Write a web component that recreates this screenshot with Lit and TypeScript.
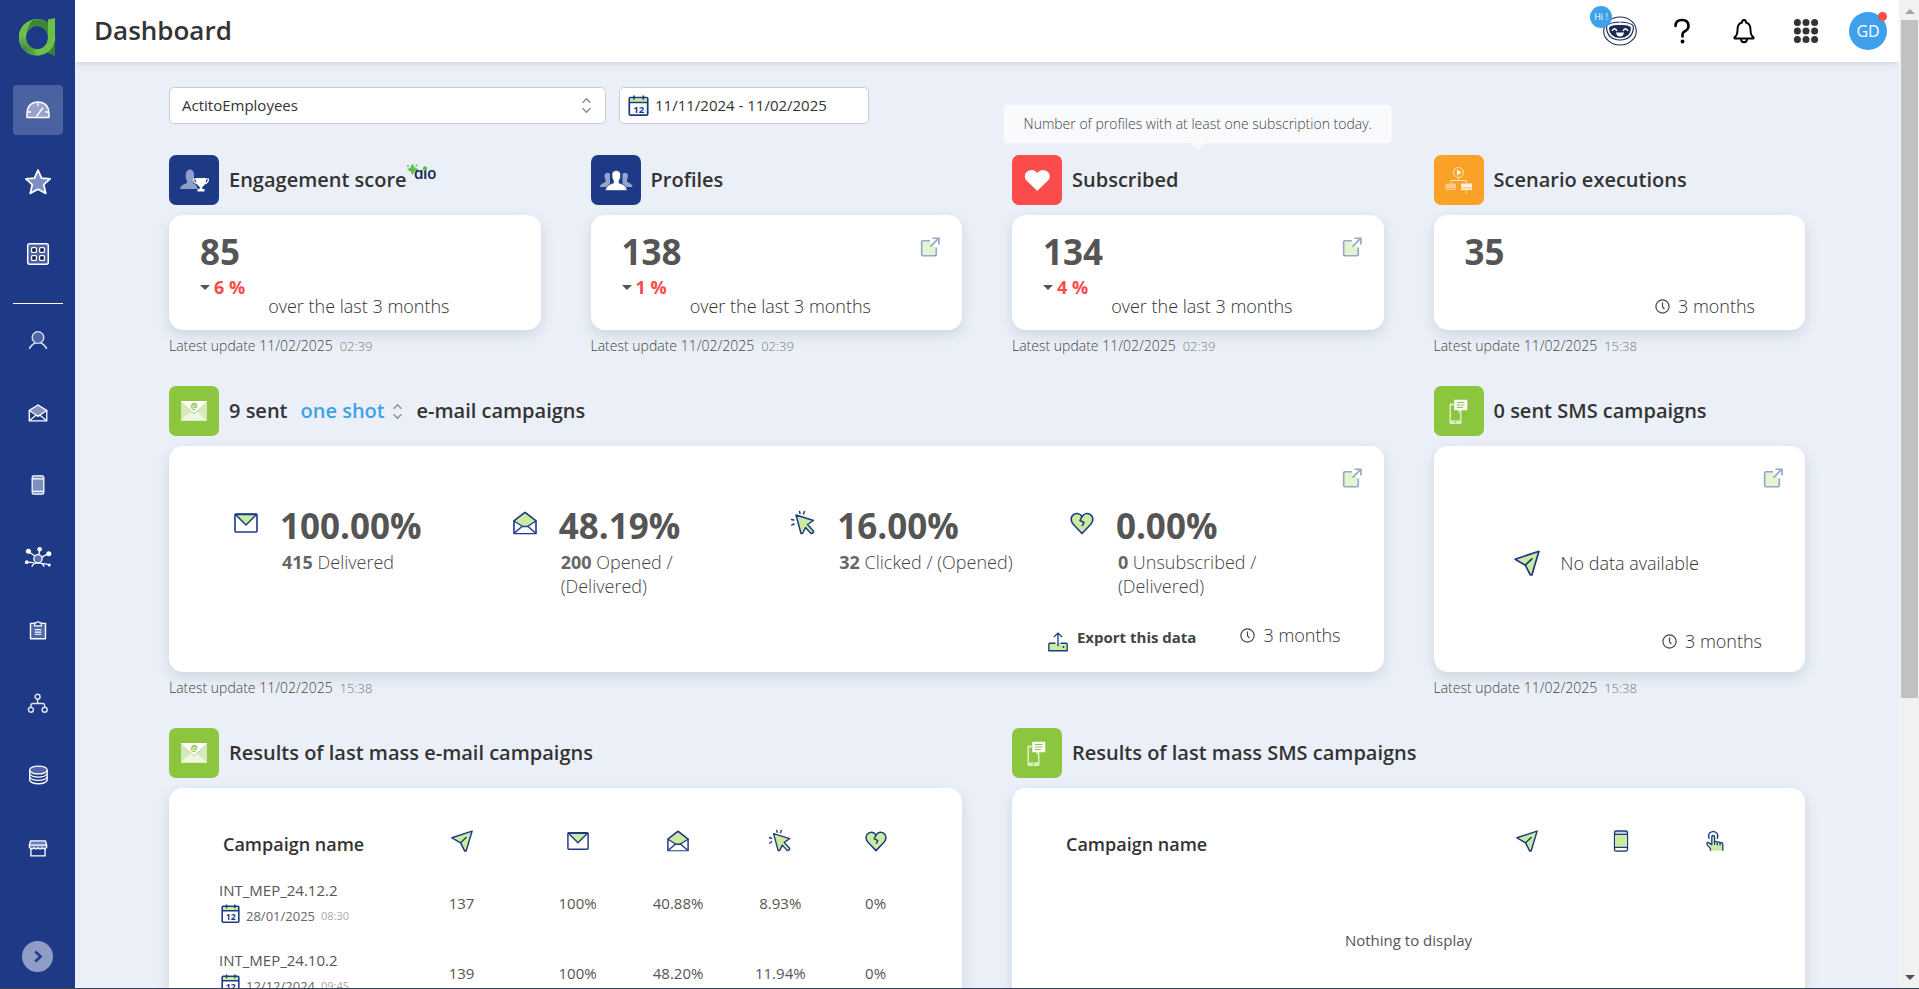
import { LitElement, html, svg, css, nothing, TemplateResult, SVGTemplateResult } from "lit";
import { customElement, property } from "lit/decorators.js";

const NAVY = "#1e3a87";
const LIME = "#cbeb9f";

const glyphs: Record<string, SVGTemplateResult> = {
  mail: svg`<rect x="1" y="3" width="22" height="18" rx="1" fill="#fff" stroke=${NAVY} stroke-width="1.6"/>
    <path d="M1.5 3.5 12 14 22.500 3.500Z" fill=${LIME} stroke=${NAVY} stroke-width="1.500" stroke-linejoin="round"/>`,
  mailOpen: svg`<path d="M1 10 12 1.500 23 10V22.500H1Z" fill="#fff" stroke=${NAVY} stroke-width="1.600" stroke-linejoin="round"/>
    <path d="M1 10 12 1.500 23 10 12 17Z" fill=${LIME} stroke=${NAVY} stroke-width="1.400" stroke-linejoin="round"/>
    <path d="M1.500 22 9 15.500H15L22.500 22" fill="#fff" stroke=${NAVY} stroke-width="1.500" stroke-linejoin="round"/>`,
  cursor: svg`<path d="M5 4 22.500 9.500 16.500 13.500 22.500 20Q22.500 22.500 20 22.500L14.500 16.500 11.500 22.500H10Z" fill=${LIME} stroke=${NAVY} stroke-width="1.500" stroke-linejoin="round"/>
    <path d="M9 2.500 8.500 0.500M12.500 3 13.500 0.500M0.500 8.500 2.800 9M0.800 14.200 3 12.800" stroke=${NAVY} stroke-width="1.500" stroke-linecap="round" fill="none"/>`,
  heartBroken: svg`<path d="M12 22.500 3 13Q0 9 2 5.200 4 2.300 7.500 2.500 10.500 3 12 5.500 13.500 3 16.500 2.500 20 2.300 22 5.200 24 9 21 13Z" fill=${LIME} stroke=${NAVY} stroke-width="1.600" stroke-linejoin="round"/>
    <path d="M12 5.500 10 9.500 14 11.500 12.500 14.500" fill="none" stroke=${NAVY} stroke-width="1.600" stroke-linejoin="round" stroke-linecap="round"/>`,
  plane: svg`<path d="M1 8.500 23 1.200 16.500 23H15L10.500 14Z" fill=${LIME} stroke=${NAVY} stroke-width="1.600" stroke-linejoin="round"/>
    <path d="M10.500 14 16.500 8.200" stroke=${NAVY} stroke-width="1.600" stroke-linecap="round"/>`,
  phone: svg`<rect x="5" y="1" width="14" height="22" rx="1.800" fill="#cfd8ee" stroke=${NAVY} stroke-width="1.600"/>
    <rect x="5.500" y="4.800" width="13" height="14" fill=${LIME}/><rect x="6" y="19.500" width="12" height="2.600" fill="#fff"/>
    <path d="M5 4.800H19M5 19H19" stroke=${NAVY} stroke-width="1.500"/>`,
  tap: svg`<path d="M7 22.500V20L3.500 16.500Q2.500 13.500 4.500 13.500L8.500 16V7Q10 5 11.500 7V13Q13 11.500 14.500 13.500 16 12 17.500 14 19.500 13 20.500 15V22.500Z" fill=${LIME}/>
    <path d="M7 22.500V20L3.500 16.500Q2.500 13.500 4.500 13.500L8.500 16V7Q10 5 11.500 7V13Q13 11.500 14.500 13.500 16 12 17.500 14 19.500 13 20.500 15V22.500M11.500 13V16M14.500 14V16.500M17.500 14.500V17" fill="none" stroke=${NAVY} stroke-width="1.400" stroke-linejoin="round"/>
    <path d="M5.500 9Q3.500 2.500 10 1.500 16.500 2.500 14.500 9" fill="none" stroke=${NAVY} stroke-width="1.500" stroke-linecap="round"/>`,
  external: svg`<path d="M12 4.500H2.500V22.500H19V12.500L16 10 13.500 12 11.500 10 13.500 8Z" fill="#e3f4d0"/>
    <path d="M12 4.500H3.500Q2 4.500 2 6V21Q2 22.500 3.500 22.500H18Q19.500 22.500 19.500 21V12.500" fill="none" stroke="#98a6cc" stroke-width="2"/>
    <path d="M12.500 11.500 22 2M15 1.500H22.700V9" fill="none" stroke="#98a6cc" stroke-width="2"/>`,
  calendar: svg`<rect x="1.500" y="3" width="21" height="20" rx="1.200" fill="#fff" stroke=${NAVY} stroke-width="2"/>
    <path d="M2.500 4H21.500V8H2.500Z" fill=${LIME}/><path d="M1.500 8.500H22.500M7 0.500V5.500M17.500 0.500V5.500" stroke=${NAVY} stroke-width="1.800"/>
    <text x="12.200" y="20" text-anchor="middle" font-size="11" font-weight="700" fill=${NAVY}>12</text>`,
  clock: svg`<circle cx="12" cy="12" r="10.600" fill="none" stroke="#444" stroke-width="1.900"/><path d="M12 5.500V12.500L15 16" fill="none" stroke="#444" stroke-width="1.900"/>`,
  export: svg`<path d="M9 13.500H2Q1 13.500 1 14.500V22.500H23V14.500Q23 13.500 22 13.500H15" fill=${LIME} stroke=${NAVY} stroke-width="1.600"/>
    <path d="M12 17V1.500M7 6 12 1.300 17 6" fill="none" stroke=${NAVY} stroke-width="1.600"/><circle cx="18.500" cy="18" r="1.100" fill=${NAVY}/>`,
  chevrons: svg`<path d="M7 8.500 12 3.500 17 8.500M7 15.500 12 20.500 17 15.500" fill="none" stroke="#8a8a8a" stroke-width="1.700"/>`,
  gauge: svg`<path d="M1 19.500V15Q2 4 12 4 22 4 23 15V19.500Z" fill="#95a2ca" stroke="#fff" stroke-width="1.500" stroke-linejoin="round"/>
    <path d="M10.500 18.500 17 9.500M12 5V8M2 14H5M19 14H22" stroke="#fff" stroke-width="1.400"/>`,
  star: svg`<path d="M12 1 15.300 8.400 23.200 9.200 17.300 14.500 19.200 22.500 12 18.700 4.800 22.500 6.700 14.500 0.800 9.200 8.700 8.400Z" fill="#7d8fc1" stroke="#fff" stroke-width="1.600" stroke-linejoin="round"/>`,
  blocks: svg`<rect x="1.700" y="1.700" width="20.600" height="20.600" rx="2" fill="#4b63a3" stroke="#fff" stroke-width="1.500"/>
    ${[[8, 8], [16, 8], [8, 16], [16, 16]].map(([x, y]) => svg`<rect x=${x - 2.4} y=${y - 2.4} width="4.800" height="4.800" rx="1" fill="#0c1531" stroke="#fff" stroke-width="1.300"/>`)}`,
  person: svg`<circle cx="12" cy="9" r="7" fill="#4f67a8" stroke="#dfe5f3" stroke-width="1.600"/><path d="M1.500 22.500Q5 16.500 9 15.500M22.500 22.500Q19 16.500 15 15.500" fill="none" stroke="#dfe5f3" stroke-width="1.900"/>`,
  navMail: svg`<path d="M1.500 9 12 2.500 22.500 9V21.500H1.500Z" fill=${NAVY} stroke="#fff" stroke-width="1.600" stroke-linejoin="round"/>
    <path d="M1.500 9 12 2.500 22.500 9 12 16Z" fill="#8192c3" stroke="#fff" stroke-width="1.400"/><path d="M2 21 9 15H15L22 21" fill="none" stroke="#fff" stroke-width="1.500"/>`,
  navPhone: svg`<rect x="5" y="1" width="14" height="22" rx="2" fill="#7d8fc1" stroke="#fff" stroke-width="1.500"/><path d="M5 4.500H19M5 19.500H19" stroke="#fff" stroke-width="1.500"/>`,
  network: svg`<circle cx="12" cy="13" r="5" fill="#5c73b0" stroke="#fff" stroke-width="1.500"/><path d="M4.500 22.500Q7 17.500 12 18 17 17.500 19.500 22.500M8.500 9.500 1.500 5M13 8 14 2.500M16.500 11 24 7M7 17.500-1 17M17.500 18.500 25 20" fill="none" stroke="#fff" stroke-width="1.500"/>
    <g fill="#fff"><circle cx="0.500" cy="4" r="3"/><circle cx="14" cy="1.500" r="2.800"/><circle cx="25" cy="6.800" r="3"/><circle cx="-1.500" cy="17" r="2.200"/><circle cx="25.500" cy="20.500" r="1.800"/></g>`,
  clipboard: svg`<path d="M3 4H21V22.500H3Z" fill="#4f67a8" stroke="#fff" stroke-width="1.700" stroke-linejoin="round"/><path d="M8 7V3.500H10Q12 0.500 14 3.500H16V7Z" fill=${NAVY} stroke="#fff" stroke-width="1.400"/><path d="M8 11.500H16M8 14.500H16M8 17H16" stroke="#fff" stroke-width="1.300"/>`,
  tree: svg`<g fill="none" stroke="#dfe5f3" stroke-width="1.700"><circle cx="11.500" cy="4.500" r="3"/><circle cx="3.500" cy="20" r="3"/><circle cx="20" cy="20" r="3"/><path d="M11.500 7.500V12.500M3.500 17V15Q3.500 12.500 6 12.500H17.500Q20 12.500 20 15V17"/></g>`,
  database: svg`<path d="M2 6V18.500Q4 22.500 12.500 22.500 21 22.500 23 18.500V6" fill="none" stroke="#fff" stroke-width="1.600"/><ellipse cx="12.500" cy="6" rx="10.500" ry="4.700" fill="#4f67a8" stroke="#fff" stroke-width="1.600"/><path d="M2 10.500Q4 14.500 12.500 14.500 21 14.500 23 10.500M2 14.500Q4 18.500 12.500 18.500 21 18.500 23 14.500" fill="none" stroke="#fff" stroke-width="1.500"/>`,
  shop: svg`<path d="M3.500 12V21.500H20.500V12" fill="none" stroke="#fff" stroke-width="1.600"/><path d="M3 3.500H21L22.500 9V11Q19.500 15 17 11.500 14.500 15 12 11.500 9.500 15 7 11.500 4.500 15 1.500 11V9Z" fill="#6a7eb7" stroke="#fff" stroke-width="1.500" stroke-linejoin="round"/><path d="M1.500 8.500H22.500" stroke="#fff" stroke-width="1.500"/>`,
  help: svg`<path d="M5.500 7Q5.500 1 12 1 18.500 1 18.500 7 18.500 10.500 14.500 12.500 12.500 13.500 12.500 15.500V17.500" fill="none" stroke="#000" stroke-width="2.600" stroke-linecap="round"/><circle cx="12.500" cy="22.500" r="1.900"/>`,
  bell: svg`<path d="M2.500 19.500Q2 18 3.500 17.500 5.500 15.500 5.500 11 5.500 4.500 10 3.500 10 1 12 1 14 1 14 3.500 18.500 4.500 18.500 11 18.500 15.500 20.500 17.500 22 18 21.500 19.500Z" fill="none" stroke="#000" stroke-width="1.900" stroke-linejoin="round"/><path d="M9 20Q9 23.300 12 23.300 15 23.300 15 20" fill="none" stroke="#000" stroke-width="1.900"/>`,
  apps: svg`${[3.4, 12, 20.6].map((y) => [3.4, 12, 20.6].map((x) => svg`<circle cx=${x} cy=${y} r="3.500" fill="#333"/>`))}`,
  next: svg`<path d="M8.500 4 17 12 8.500 20" fill="none" stroke=${NAVY} stroke-width="4"/>`,
};

const tiles: Record<string, SVGTemplateResult> = {
  trophy: svg`<path d="M11 34Q11 30 18 28V26Q16 23 17 18 18 14.500 21 14.500 24 14.500 25 18 25.500 23 24 26V28L27 30 29 34Z" fill="#8f9dc7"/>
    <path d="M26.500 23H37.500Q37.500 27 35.500 30 34 31.500 33.300 32V34H35.500V36.500H28.500V34H30.700V32Q26.500 29 26.500 23Z" fill="#fff"/><path d="M27 24H24.500Q24.500 28 28.500 29M37 24H39.500Q39.500 28 35.500 29" fill="none" stroke="#fff" stroke-width="1.200"/>`,
  people: svg`<path d="M9 32Q9 29 14.500 27V25Q12.500 20 14.500 18.500 17 17 19 19V29L15 32ZM41.500 32Q41.500 29 36 27V25Q38 20 36 18.500 33.500 17 31.500 19V29L35.500 32Z" fill="#96a4cb"/>
    <path d="M14.500 35.500Q14.500 30 22.500 28V26Q20.500 23 21 18.500 22 15.500 25.200 15.500 28.500 15.500 29.500 18.500 30 23 28 26V28Q36 30 36 35.500Z" fill="#fff" stroke=${NAVY} stroke-width="0.600"/>`,
  heart: svg`<path d="M25.200 36 14 25Q11.500 21.500 14 17.500 16.500 14.500 20.500 15 23.500 15.300 25.200 18 27 15.300 30 15 34 14.500 36.500 17.500 39 21.500 36.500 25Z" fill="#fff"/>`,
  scenario: svg`<circle cx="24.500" cy="17.500" r="5" fill="none" stroke="#fde3bd" stroke-width="1"/><path d="M23 14.500 27.500 17.500 23 20.500Z" fill="#fff"/>
    <path d="M24.500 22.500V25.500M17 28V25.500H32.500V28M32.500 35V39" fill="none" stroke="#fde3bd" stroke-width="0.900"/><rect x="11.500" y="28.500" width="10.500" height="6.500" fill="#fcca84"/><rect x="27" y="28.500" width="11" height="6.500" fill="#fff0da"/><path d="M12 33.500H22M27 33H38" stroke="#fbb24d" stroke-width="0.800"/>`,
  email: svg`<rect x="12" y="15" width="26" height="19.500" fill="#fff"/><path d="M12 16.500V34.500H38V16.500L25 28Z" fill="#d5eab8"/><path d="M12 34.500 22 25.500 25 28 28 25.500 38 34.500Z" fill="#eef7e2"/><path d="M12 16 25 28 38 16" fill="none" stroke="#a9bf8c" stroke-width="0.700"/>
    <text x="25" y="22.500" text-anchor="middle" font-size="8" font-weight="700" fill="#8cc63f">@</text>`,
  sms: svg`<rect x="15.500" y="17.500" width="12" height="20.500" rx="1" fill="#dceec5"/><rect x="17" y="19.500" width="9" height="15" fill="#8cc63f"/><circle cx="21.500" cy="36.300" r="0.900" fill="#8cc63f"/>
    <path d="M20 13.500H33.500V24.500H27L24.500 27.500V24.500H20Z" fill="#fff" stroke="#8cc63f" stroke-width="0.500"/><path d="M23 16.500H30.500M23 19H30.500M23 21.500H29" stroke="#8cc63f" stroke-width="1.100"/>`,
};

const icon = (name: string, cls = "i24") =>
  html`<svg class="icon ${cls}" viewBox="0 0 24 24" aria-hidden="true">${glyphs[name]}</svg>`;

const shared = css`
  * { box-sizing: border-box; }
  .icon { display: block; flex: none; overflow: visible; }
  .i16 { width: 15px; height: 15px; }
  .i20 { width: 20px; height: 20px; }
  .i22 { width: 22px; height: 22px; }
  .i24 { width: 24px; height: 24px; }
  .i28 { width: 26px; height: 26px; }
  button, select, input { font: inherit; color: inherit; margin: 0; }
  button { border: 0; padding: 0; background: none; cursor: pointer; }
  a { color: inherit; text-decoration: none; }
`;

@customElement("dash-panel")
export class DashPanel extends LitElement {
  @property() tile = "email";
  @property() tone = "navy";
  @property() date = "";
  @property() time = "";
  @property() tip = "";

  static styles = [shared, css`
    :host { display: flex; flex-direction: column; min-width: 0; }
    .head { display: flex; align-items: center; gap: 10px; height: 50px; margin-bottom: 10px; position: relative; }
    .tile { width: 50px; height: 50px; border-radius: 7px; flex: none; }
    .navy { background: #1e3a87; }
    .red { background: #fb4b4a; }
    .orange { background: #faa227; }
    .green { background: #8cc63f; }
    .title { margin: 0; font-size: 20px; line-height: 28px; font-weight: 600; color: #333; display: flex; align-items: center; white-space: nowrap; }
    .card { background: #fff; border-radius: 14px; box-shadow: 0 5px 14px rgba(40, 60, 80, .15); flex: 1; display: flex; flex-direction: column; }
    .foot { display: flex; align-items: baseline; gap: 7px; margin: 6px 0 0; font-size: 14px; line-height: 20px; font-weight: 300; color: #444; }
    .time { font-size: 13px; color: #777; }
    .tip { position: absolute; left: 50%; bottom: 62px; transform: translateX(-50%); padding: 0 20px; line-height: 38px; font-size: 14px; font-weight: 300; color: #444; background: #f8fafc; border-radius: 4px; white-space: nowrap; }
    .tip::after { content: ""; position: absolute; left: 50%; top: 100%; margin-left: -7px; border: 7px solid transparent; border-top-color: #f8fafc; border-bottom: 0; }
  `];

  render() {
    return html`
      <div class="head">
        <svg class="tile ${this.tone}" viewBox="0 0 50 50" aria-hidden="true">${tiles[this.tile]}</svg>
        <h2 class="title"><slot name="title"></slot></h2>
        ${this.tip ? html`<div class="tip" role="tooltip">${this.tip}</div>` : nothing}
      </div>
      <div class="card"><slot></slot></div>
      ${this.date ? html`<p class="foot"><span>Latest update ${this.date}</span><span class="time">${this.time}</span></p>` : nothing}
    `;
  }
}

interface Rate { icon: string; rate: string; count: string; label: string; }
interface Campaign { name: string; date: string; time: string; values: string[]; }

@customElement("app-root")
export class AppRoot extends LitElement {
  private mainNav = [["gauge", "Dashboard"], ["star", "Favourites"], ["blocks", "Catalogue"]];
  private subNav = [["person", "Profiles"], ["navMail", "E-mail"], ["navPhone", "Mobile"], ["network", "Scenarios"], ["clipboard", "Surveys"], ["tree", "Structure"], ["database", "Data"], ["shop", "Marketplace"]];
  private rates: Rate[] = [
    { icon: "mail", rate: "100.00%", count: "415", label: "Delivered" },
    { icon: "mailOpen", rate: "48.19%", count: "200", label: "Opened / (Delivered)" },
    { icon: "cursor", rate: "16.00%", count: "32", label: "Clicked / (Opened)" },
    { icon: "heartBroken", rate: "0.00%", count: "0", label: "Unsubscribed / (Delivered)" },
  ];
  private campaigns: Campaign[] = [
    { name: "INT_MEP_24.12.2", date: "28/01/2025", time: "08:30", values: ["137", "100%", "40.88%", "8.93%", "0%"] },
    { name: "INT_MEP_24.10.2", date: "12/12/2024", time: "09:45", values: ["139", "100%", "48.20%", "11.94%", "0%"] },
  ];

  static styles = [shared, css`
    :host { display: grid; grid-template-columns: 75px minmax(0, 1fr) 20px; height: 100vh; overflow: hidden; border-bottom: 1px solid #3a4154; box-sizing: border-box; background: #ebf0f8; font-family: "Open Sans", "Noto Sans", sans-serif; color: #555; }
    .side { background: #1e3a87; display: flex; flex-direction: column; align-items: center; padding: 18px 0 16px; min-height: 0; }
    .logo { display: block; width: 38px; height: 38px; margin-bottom: 29px; }
    .list { list-style: none; margin: 0; padding: 0; display: flex; flex-direction: column; }
    .main-list { gap: 22px; }
    .sub-list { flex: 1; justify-content: space-between; margin: 11px 0 68px; }
    .nav { display: flex; align-items: center; justify-content: center; width: 50px; height: 50px; border-radius: 4px; }
    .nav.on { background: #4b62a0; }
    .rule { width: 50px; height: 0; border: 0; border-top: 1px solid #fff; margin: 24px 0 0; }
    .expand { width: 31px; height: 31px; border-radius: 50%; background: #8f9dc6; display: grid; place-items: center; }

    .page { display: flex; flex-direction: column; min-width: 0; min-height: 0; }
    .top { display: flex; align-items: center; justify-content: space-between; height: 62px; flex: none; padding: 0 12px 0 19px; background: #fff; box-shadow: 0 2px 6px rgba(40, 60, 80, .14); }
    .top h1 { margin: 0; font-size: 26px; line-height: 36px; font-weight: 600; color: #333; padding-bottom: 3px; }
    .tools { display: flex; align-items: center; gap: 24px; }
    .tool { width: 38px; height: 38px; display: grid; place-items: center; position: relative; }
    .bot { display: block; width: 34px; height: 30px; }
    .hi { position: absolute; left: -11px; top: -6px; width: 22px; height: 22px; border-radius: 50%; background: #3fa1ec; color: #fff; font-size: 9px; line-height: 22px; text-align: center; }
    .avatar { border-radius: 50%; background: #3fa1ec; color: #fff; font-size: 16px; font-weight: 500; }
    .dot { position: absolute; right: 0; top: 0; width: 9px; height: 9px; border-radius: 50%; background: #fb4b4a; }

    .body { padding: 25px 94px 0; min-height: 0; }
    .filters { display: flex; gap: 13px; margin-bottom: 31px; }
    .field { display: grid; align-items: center; background: #fff; border: 1px solid #ccc; border-radius: 5px; height: 37px; flex: 0 1 437px; font-size: 15px; color: #333; }
    .field.date { flex-basis: 250px; }
    .field > * { grid-area: 1 / 1; }
    .field select, .field input { appearance: none; width: 100%; height: 100%; border: 0; background: none; padding: 0 12px 2px; outline: 0; }
    .field input { padding-left: 35px; }
    .field .icon { pointer-events: none; }
    .field .end { justify-self: end; margin-right: 9px; width: 19px; height: 19px; }
    .field .start { justify-self: start; margin-left: 8px; width: 21px; height: 21px; }

    .grid { display: grid; grid-template-columns: repeat(4, minmax(0, 1fr)); gap: 30px 50px; }
    .w2 { grid-column: span 2; }
    .w3 { grid-column: span 3; }
    .aio { display: block; width: 34px; height: 24px; margin: -14px 0 0 -1px; overflow: visible; font-family: Inter, sans-serif; font-feature-settings: "cv11"; }

    .kpi { display: flex; flex-direction: column; min-height: 115px; padding: 13px 22px 13px 31px; }
    .kpi-top { display: flex; justify-content: space-between; align-items: flex-start; }
    .kpi-top a { padding-top: 9px; }
    .num { font-size: 35px; line-height: 48px; font-weight: 700; color: #555; }
    .delta { display: flex; align-items: center; gap: 4px; margin-top: 3px; font-size: 18px; line-height: 16px; font-weight: 700; color: #fb4b4a; }
    .caret { border: 5px solid transparent; border-top-color: #555; border-bottom: 0; }
    .over { text-align: right; padding-right: 69px; font-size: 18px; line-height: 22px; font-weight: 300; color: #333; }
    .period { display: flex; align-items: center; justify-content: flex-end; gap: 8px; font-size: 18px; line-height: 22px; font-weight: 300; color: #333; }
    .kpi .period { margin-top: auto; padding-right: 28px; }

    .wide { display: flex; flex-direction: column; min-height: 226px; padding: 22px 22px 20px; }
    .wide > a { align-self: flex-end; }
    .rates { display: grid; grid-template-columns: repeat(4, minmax(0, 1fr)); column-gap: 40px; margin: 14px 53px 0 43px; }
    .rate { display: grid; grid-template-columns: 24px minmax(0, 1fr); column-gap: 22px; align-content: start; }
    .rate .icon { margin-top: 9px; }
    .label { grid-column: 2; margin: 0 0 0 2px; font-size: 18px; line-height: 24px; font-weight: 300; color: #444; }
    .label b { font-weight: 700; color: #666; }
    .actions { display: flex; justify-content: flex-end; align-items: center; gap: 44px; margin-top: auto; padding: 0 21px 6px 0; }
    .export { display: flex; align-items: center; gap: 9px; font-size: 15px; line-height: 22px; font-weight: 700; color: #444; height: 22px; padding-top: 3px; }
    .export .icon { margin-top: 10px; }
    .empty { display: flex; align-items: center; gap: 21px; margin: auto 0 auto 58px; padding-top: 8px; font-size: 18px; line-height: 24px; font-weight: 300; color: #333; }
    .wide .period { padding-right: 21px; }
    .actions .period { padding: 0; }

    .shot { display: inline-grid; align-items: center; width: 102px; margin: 0 14px 0 13px; color: #3fa1ec; }
    .shot > * { grid-area: 1 / 1; }
    .shot select { appearance: none; border: 0; padding: 0; background: none; outline: 0; width: 100%; }
    .shot .icon { justify-self: end; width: 19px; height: 19px; margin-right: -4px; pointer-events: none; }

    .sheet { padding: 42px 50px 30px; }
    .sheet.sms { padding-right: 43px; }
    table { width: 100%; table-layout: fixed; border-collapse: collapse; font-size: 15px; }
    th { padding: 0 0 11px; vertical-align: bottom; font-size: 18px; line-height: 24px; font-weight: 600; color: #333; }
    th:first-child { text-align: left; padding-left: 4px; }
    th .icon { margin: 0 auto 4px; }
    td { padding: 14px 0 12px; text-align: center; line-height: 22px; }
    td:first-child { text-align: left; padding-top: 12px; }
    .when { display: flex; align-items: flex-end; gap: 6px; padding-left: 2px; height: 24px; font-size: 13px; line-height: 18px; color: #666; }
    .when small { font-size: 11px; color: #aaa; }
    .when .icon { width: 19px; height: 19px; margin-bottom: 2px; }
    .c26 { width: 26.5%; } .c17 { width: 17%; } .c16 { width: 16.5%; } .c12 { width: 12.5%; } .c10 { width: 10.5%; }
    .c60 { width: 59.8%; } .c13 { width: 13.4%; }
    td:first-child.none { text-align: center; padding: 62px 7px 62px 0; }

    .scroll { display: flex; flex-direction: column; align-items: center; background: #f1f1f1; padding: 9px 0 8px 1px; }
    .up, .down { border: 5px solid transparent; }
    .up { border-top: 0; border-bottom-color: #a3a3a3; margin-bottom: 6px; }
    .down { border-bottom: 0; border-top-color: #505050; }
    .track { flex: 1; width: 17px; }
    .thumb { height: 71%; background: #c1c1c1; }
  `];

  private navItem([glyph, label]: string[], on = false) {
    return html`<li><a class="nav ${on ? "on" : ""}" href="#" aria-label=${label}>${icon(glyph, glyph === "star" ? "i28" : glyph === "gauge" || glyph === "blocks" ? "i24" : "i20")}</a></li>`;
  }

  private period() {
    return html`<div class="period">${icon("clock", "i16")}<span>3 months</span></div>`;
  }

  private open() {
    return html`<a href="#" aria-label="Open details">${icon("external", "i20")}</a>`;
  }

  private kpi(value: string, bottom: TemplateResult, link = false) {
    return html`<div class="kpi"><div class="kpi-top"><span class="num">${value}</span>${link ? this.open() : nothing}</div>${bottom}</div>`;
  }

  private change(pct: string) {
    return html`<div class="delta"><span class="caret"></span>${pct} %</div><div class="over">over the last 3 months</div>`;
  }

  render() {
    return html`
      <nav class="side" aria-label="Main">
        <svg class="logo" viewBox="0 0 38 38" aria-hidden="true">
          <defs>
            <linearGradient id="g1" x1="0" y1="0" x2="0" y2="1"><stop offset="0" stop-color="#6cc04a"/><stop offset="1" stop-color="#3c7d34"/></linearGradient>
            <linearGradient id="g2" x1="0" y1="0" x2="1" y2="0"><stop offset="0" stop-color="#3f8637"/><stop offset="1" stop-color="#6cc04a"/></linearGradient>
          </defs>
          <path d="M29 30 36 26V38L29 35Z" fill="#3c7d34"/>
          <path d="M18 1A18 18 0 1 0 18 37.500 18 18 0 1 0 18 1ZM18 8A11 11.500 0 1 1 18 31 11 11.500 0 1 1 18 8Z" fill="#6cc04a" fill-rule="evenodd"/>
          <path d="M14 2Q26-1 31 7L29 16Q25 7 16 8 10 9 7.500 14 8 6 14 2Z" fill="#3f8637"/>
          <path d="M14 2Q3 5 0.500 16 8 14 9.500 9 11 4 14 2Z" fill="#6cc04a"/>
          <path d="M0.300 18Q0 30 10 35.500L17 31Q8 30 6.800 21 4 15 0.300 18Z" fill="url(#g1)"/>
          <path d="M8 34.500Q14 39 22 37 16 37 15 31 9 29 4 29Z" fill="url(#g2)"/>
          <path d="M29 1.500 36 0V20Q36 33 20 37.500 29 31 29 19Z" fill="#6cc04a"/>
        </svg>
        <ul class="list main-list">${this.mainNav.map((n, i) => this.navItem(n, i === 0))}</ul>
        <hr class="rule" />
        <ul class="list sub-list">${this.subNav.map((n) => this.navItem(n))}</ul>
        <button class="expand" aria-label="Expand menu">${icon("next", "i16")}</button>
      </nav>

      <div class="page">
        <header class="top">
          <h1>Dashboard</h1>
          <div class="tools">
            <button class="tool" aria-label="Assistant">
              <svg class="bot" viewBox="0 0 34 30" aria-hidden="true">
                <ellipse cx="17" cy="15" rx="16.300" ry="14" fill="#fff" stroke="#1c2b52" stroke-width="1.100"/>
                <path d="M3.500 11Q4 6.500 17 6 30 6.500 30.500 11 30 23.500 17 24 4 23.500 3.500 11Z" fill="none" stroke="#1c2b52" stroke-width="1.200"/>
                <path d="M6 12.500Q6 8.500 17 9 28 8.500 28 12.500 27.500 21.500 17 22 6.500 21.500 6 12.500Z" fill="#1c2b52"/>
                <path d="M9 15Q11.500 10.500 14 15M20 15Q22.500 10.500 25 15" fill="none" stroke="#fff" stroke-width="1.500"/>
                <path d="M13 16.500H21Q20.500 20.500 17 20.500 13.500 20.500 13 16.500Z" fill="#fff"/><path d="M17 4.500V8" stroke="#fff"/>
              </svg>
              <span class="hi">Hi !</span>
            </button>
            <button class="tool" aria-label="Help">${icon("help")}</button>
            <button class="tool" aria-label="Notifications">${icon("bell")}</button>
            <button class="tool" aria-label="Applications">${icon("apps")}</button>
            <button class="tool avatar">GD<span class="dot"></span></button>
          </div>
        </header>

        <main class="body">
          <div class="filters">
            <div class="field">
              <select aria-label="Profile table"><option>ActitoEmployees</option></select>
              ${icon("chevrons", "end")}
            </div>
            <label class="field date">
              ${icon("calendar", "start")}
              <input type="text" aria-label="Period" value="11/11/2024 - 11/02/2025" />
            </label>
          </div>

          <div class="grid">
            <dash-panel tile="trophy" tone="navy" date="11/02/2025" time="02:39">
              <span slot="title">Engagement score</span>
              <svg slot="title" class="aio" viewBox="0 0 34 24" role="img" aria-label="aio">
                <path d="M6.500 3Q7.500 7.500 12 8.500 7.500 9.500 6.500 13.500 5.500 9.500 1.500 8.500 5.500 7.500 6.500 3Z" fill="#5cc247" stroke="#5cc247" stroke-width="0.800"/>
                <circle cx="2" cy="5" r="1" fill="#5cc247"/><circle cx="10.500" cy="4.500" r="1" fill="#5cc247"/>
                <text x="8" y="18" font-size="15" font-weight="600" fill="#1c2b52">aio</text>
                <circle cx="19" cy="7.500" r="2.200" fill="#5cc247"/>
              </svg>
              ${this.kpi("85", this.change("6"))}
            </dash-panel>
            <dash-panel tile="people" tone="navy" date="11/02/2025" time="02:39">
              <span slot="title">Profiles</span>
              ${this.kpi("138", this.change("1"), true)}
            </dash-panel>
            <dash-panel tile="heart" tone="red" date="11/02/2025" time="02:39" tip="Number of profiles with at least one subscription today.">
              <span slot="title">Subscribed</span>
              ${this.kpi("134", this.change("4"), true)}
            </dash-panel>
            <dash-panel tile="scenario" tone="orange" date="11/02/2025" time="15:38">
              <span slot="title">Scenario executions</span>
              ${this.kpi("35", this.period())}
            </dash-panel>

            <dash-panel class="w3" tile="email" tone="green" date="11/02/2025" time="15:38">
              <span slot="title">9 sent</span>
              <span slot="title" class="shot">
                <select aria-label="Campaign type"><option>one shot</option></select>
                ${icon("chevrons")}
              </span>
              <span slot="title">e-mail campaigns</span>
              <div class="wide">
                ${this.open()}
                <div class="rates">
                  ${this.rates.map((r) => html`
                    <div class="rate">
                      ${icon(r.icon)}
                      <span class="num">${r.rate}</span>
                      <p class="label"><b>${r.count}</b> ${r.label}</p>
                    </div>`)}
                </div>
                <div class="actions">
                  <button class="export">${icon("export", "i20")}<span>Export this data</span></button>
                  ${this.period()}
                </div>
              </div>
            </dash-panel>
            <dash-panel tile="sms" tone="green" date="11/02/2025" time="15:38">
              <span slot="title">0 sent SMS campaigns</span>
              <div class="wide">
                ${this.open()}
                <div class="empty">${icon("plane", "i28")}<span>No data available</span></div>
                ${this.period()}
              </div>
            </dash-panel>

            <dash-panel class="w2" tile="email" tone="green">
              <span slot="title">Results of last mass e-mail campaigns</span>
              <div class="sheet">
                <table>
                  <thead>
                    <tr>
                      <th class="c26" scope="col">Campaign name</th>
                      <th class="c17" scope="col" aria-label="Sent">${icon("plane", "i22")}</th>
                      <th class="c16" scope="col" aria-label="Delivered">${icon("mail", "i22")}</th>
                      <th class="c12" scope="col" aria-label="Opened">${icon("mailOpen", "i22")}</th>
                      <th class="c17" scope="col" aria-label="Clicked">${icon("cursor", "i22")}</th>
                      <th class="c10" scope="col" aria-label="Unsubscribed">${icon("heartBroken", "i22")}</th>
                    </tr>
                  </thead>
                  <tbody>
                    ${this.campaigns.map((c) => html`
                      <tr>
                        <td>${c.name}<div class="when">${icon("calendar")}<span>${c.date}</span><small>${c.time}</small></div></td>
                        ${c.values.map((v) => html`<td>${v}</td>`)}
                      </tr>`)}
                  </tbody>
                </table>
              </div>
            </dash-panel>
            <dash-panel class="w2" tile="sms" tone="green">
              <span slot="title">Results of last mass SMS campaigns</span>
              <div class="sheet sms">
                <table>
                  <thead>
                    <tr>
                      <th class="c60" scope="col">Campaign name</th>
                      <th class="c13" scope="col" aria-label="Sent">${icon("plane", "i22")}</th>
                      <th class="c13" scope="col" aria-label="Delivered">${icon("phone", "i22")}</th>
                      <th class="c13" scope="col" aria-label="Clicked">${icon("tap", "i22")}</th>
                    </tr>
                  </thead>
                  <tbody><tr><td class="none" colspan="4">Nothing to display</td></tr></tbody>
                </table>
              </div>
            </dash-panel>
          </div>
        </main>
      </div>

      <div class="scroll" aria-hidden="true">
        <span class="up"></span>
        <div class="track"><div class="thumb"></div></div>
        <span class="down"></span>
      </div>
    `;
  }
}
